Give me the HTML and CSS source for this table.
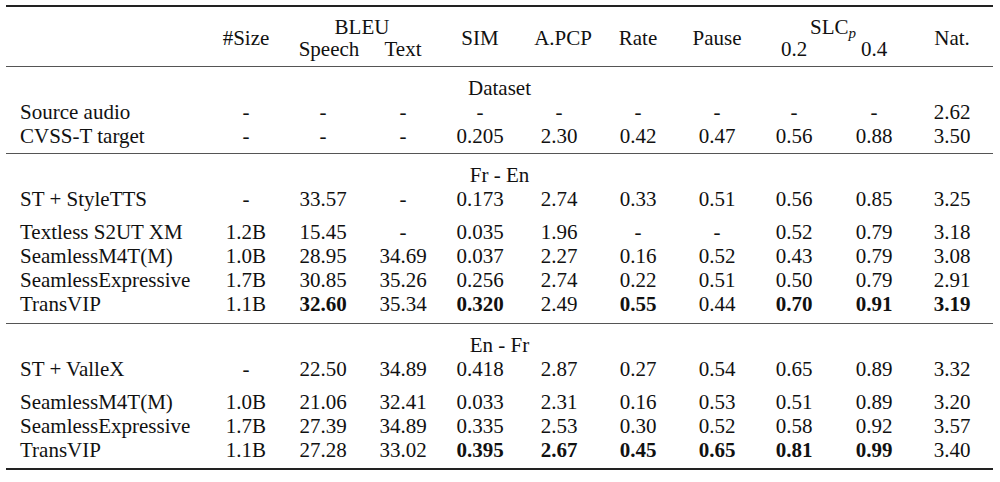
FILE: index.html
```html
<!DOCTYPE html>
<html>
<head>
<meta charset="utf-8">
<link rel="stylesheet" href="styles.css">
</head>
<body>
<table class="results">
  <colgroup>
    <col class="c-model"><col class="c-size"><col class="c-speech"><col class="c-text"><col class="c-sim"><col class="c-apcp"><col class="c-rate"><col class="c-pause"><col class="c-slc2"><col class="c-slc4"><col class="c-nat">
  </colgroup>
  <thead>
    <tr class="h1">
      <th rowspan="2" class="span2 model"></th>
      <th rowspan="2" class="span2">#Size</th>
      <th colspan="2">BLEU</th>
      <th rowspan="2" class="span2">SIM</th>
      <th rowspan="2" class="span2 apcp">A.PCP</th>
      <th rowspan="2" class="span2">Rate</th>
      <th rowspan="2" class="span2">Pause</th>
      <th colspan="2" class="slc">SLC<sub>p</sub></th>
      <th rowspan="2" class="span2 nat">Nat.</th>
    </tr>
    <tr class="h2">
      <th class="speech">Speech</th>
      <th>Text</th>
      <th>0.2</th>
      <th>0.4</th>
    </tr>
  </thead>
  <tbody class="grp first">
    <tr class="sect"><td colspan="11">Dataset</td></tr>
    <tr><td class="model">Source audio</td><td>-</td><td>-</td><td>-</td><td>-</td><td>-</td><td>-</td><td>-</td><td>-</td><td>-</td><td class="nat">2.62</td></tr>
    <tr class="last"><td class="model">CVSS-T target</td><td>-</td><td>-</td><td>-</td><td>0.205</td><td>2.30</td><td>0.42</td><td>0.47</td><td>0.56</td><td>0.88</td><td class="nat">3.50</td></tr>
  </tbody>
  <tbody class="grp">
    <tr class="sect"><td colspan="11">Fr - En</td></tr>
    <tr><td class="model">ST + StyleTTS</td><td>-</td><td>33.57</td><td>-</td><td>0.173</td><td>2.74</td><td>0.33</td><td>0.51</td><td>0.56</td><td>0.85</td><td class="nat">3.25</td></tr>
    <tr class="gap"><td class="model">Textless S2UT XM</td><td>1.2B</td><td>15.45</td><td>-</td><td>0.035</td><td>1.96</td><td>-</td><td>-</td><td>0.52</td><td>0.79</td><td class="nat">3.18</td></tr>
    <tr><td class="model">SeamlessM4T(M)</td><td>1.0B</td><td>28.95</td><td>34.69</td><td>0.037</td><td>2.27</td><td>0.16</td><td>0.52</td><td>0.43</td><td>0.79</td><td class="nat">3.08</td></tr>
    <tr><td class="model">SeamlessExpressive</td><td>1.7B</td><td>30.85</td><td>35.26</td><td>0.256</td><td>2.74</td><td>0.22</td><td>0.51</td><td>0.50</td><td>0.79</td><td class="nat">2.91</td></tr>
    <tr class="last mid"><td class="model">TransVIP</td><td>1.1B</td><td><b>32.60</b></td><td>35.34</td><td><b>0.320</b></td><td>2.49</td><td><b>0.55</b></td><td>0.44</td><td><b>0.70</b></td><td><b>0.91</b></td><td class="nat"><b>3.19</b></td></tr>
  </tbody>
  <tbody class="grp">
    <tr class="sect"><td colspan="11">En - Fr</td></tr>
    <tr><td class="model">ST + ValleX</td><td>-</td><td>22.50</td><td>34.89</td><td>0.418</td><td>2.87</td><td>0.27</td><td>0.54</td><td>0.65</td><td>0.89</td><td class="nat">3.32</td></tr>
    <tr class="gap"><td class="model">SeamlessM4T(M)</td><td>1.0B</td><td>21.06</td><td>32.41</td><td>0.033</td><td>2.31</td><td>0.16</td><td>0.53</td><td>0.51</td><td>0.89</td><td class="nat">3.20</td></tr>
    <tr><td class="model">SeamlessExpressive</td><td>1.7B</td><td>27.39</td><td>34.89</td><td>0.335</td><td>2.53</td><td>0.30</td><td>0.52</td><td>0.58</td><td>0.92</td><td class="nat">3.57</td></tr>
    <tr class="last end"><td class="model">TransVIP</td><td>1.1B</td><td>27.28</td><td>33.02</td><td><b>0.395</b></td><td><b>2.67</b></td><td><b>0.45</b></td><td><b>0.65</b></td><td><b>0.81</b></td><td><b>0.99</b></td><td class="nat">3.40</td></tr>
  </tbody>
</table>
</body>
</html>
```

FILE: styles.css
```css
html, body {
  margin: 0;
  padding: 0;
  background: #ffffff;
}

body {
  padding: 5px 0 0 6px;
  font-family: "Liberation Serif", "Times New Roman", serif;
  font-size: 21px;
  color: #111111;
}

.results {
  table-layout: fixed;
  width: 987px;
  border-collapse: separate;
  border-spacing: 0;
}

.c-model { width: 204px; }
.c-size { width: 72px; }
.c-speech { width: 82px; }
.c-text { width: 78px; }
.c-sim { width: 76px; }
.c-apcp { width: 82px; }
.c-rate { width: 76px; }
.c-pause { width: 82px; }
.c-slc2 { width: 72px; }
.c-slc4 { width: 88px; }
.c-nat { width: 75px; }

th, td {
  padding: 0;
  font-weight: normal;
  text-align: center;
  white-space: nowrap;
}

b {
  font-weight: bold;
}

/* header */
thead th {
  line-height: 22px;
  height: 22px;
}

.h1 th {
  border-top: 2px solid #222;
  padding-top: 9px;
}

.h2 th {
  padding-bottom: 6px;
  border-bottom: 1px solid #555;
}

.h1 th.span2 {
  padding-bottom: 6px;
  border-bottom: 1px solid #555;
  vertical-align: middle;
}

th.apcp {
  padding-left: 8px;
}

th.speech {
  padding-left: 12px;
}

th.slc {
  padding-right: 10px;
}

.slc sub {
  font-style: italic;
  font-size: 15px;
  vertical-align: baseline;
  position: relative;
  top: 4px;
  line-height: 0;
}

/* body */
tbody td {
  line-height: 24px;
  height: 24px;
}

.model {
  text-align: left;
  padding-left: 14px;
}

.nat {
  padding-right: 7px;
}

.sect td {
  padding-top: 9px;
}

.grp:not(.first) .sect td {
  border-top: 1px solid #555;
}

.gap td {
  padding-top: 9px;
}

.last td {
  padding-bottom: 5px;
}

.last.mid td {
  padding-bottom: 7px;
}

.last.end td {
  padding-bottom: 6px;
  border-bottom: 2px solid #222;
}
```
